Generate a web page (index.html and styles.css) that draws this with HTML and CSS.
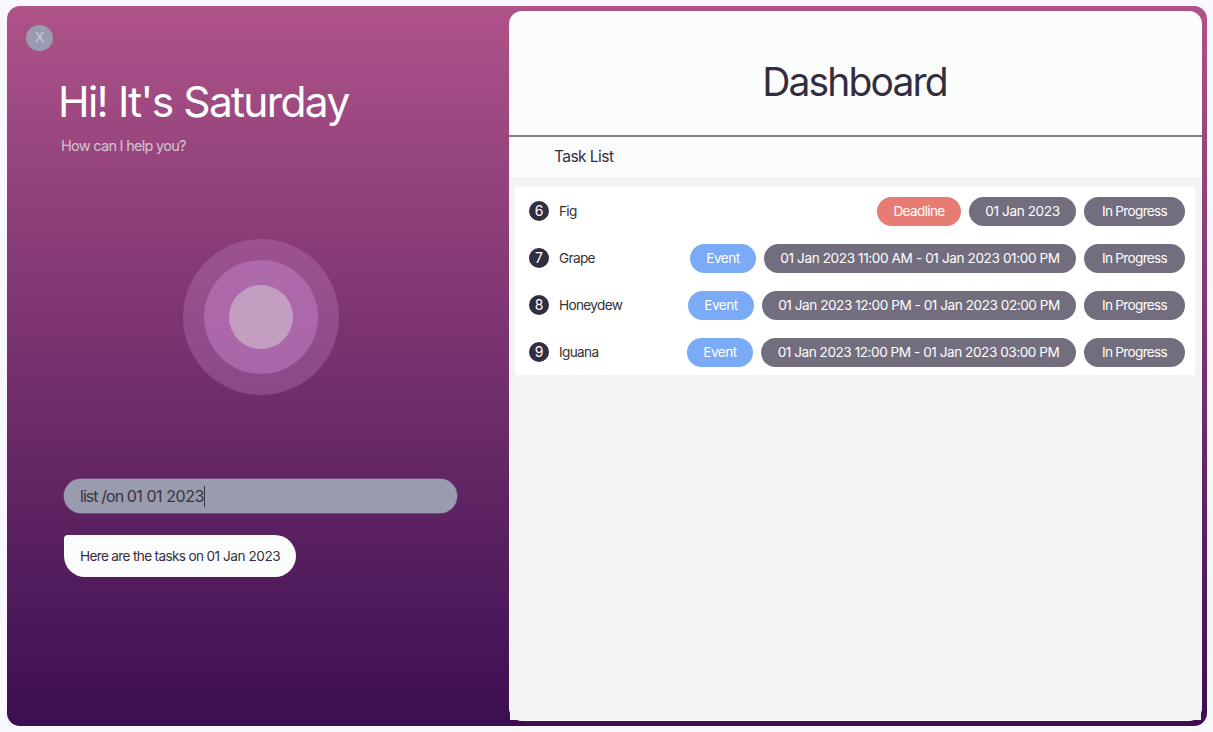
FILE: index.html
```html
<!DOCTYPE html>
<html lang="en">
<head>
<meta charset="utf-8">
<title>Dashboard</title>
<link rel="stylesheet" href="styles.css">
</head>
<body>
<div class="window">
  <section class="assistant">
    <button class="close">X</button>
    <h1 class="greeting">Hi! It's Saturday</h1>
    <p class="prompt">How can I help you?</p>
    <div class="orb"><div class="orb-mid"><div class="orb-core"></div></div></div>
    <div class="command"><span class="command-text">list /on <span class="digits">01 01 2023</span></span><span class="caret"></span></div>
    <div class="reply">Here are the tasks on <span class="digits">01 Jan 2023</span></div>
  </section>
  <main class="panel">
    <header class="panel-head"><h2 class="title">Dashboard</h2></header>
    <div class="subhead"><span>Task List</span></div>
    <div class="content">
      <ul class="tasks">
        <li class="task"><span class="num">6</span><span class="name">Fig</span><span class="tag deadline">Deadline</span><span class="tag date">01 Jan 2023</span><span class="tag status">In Progress</span></li>
        <li class="task"><span class="num">7</span><span class="name">Grape</span><span class="tag event">Event</span><span class="tag range-a">01 Jan 2023 11:00 AM - 01 Jan 2023 01:00 PM</span><span class="tag status">In Progress</span></li>
        <li class="task"><span class="num">8</span><span class="name">Honeydew</span><span class="tag event">Event</span><span class="tag range-b">01 Jan 2023 12:00 PM - 01 Jan 2023 02:00 PM</span><span class="tag status">In Progress</span></li>
        <li class="task"><span class="num">9</span><span class="name">Iguana</span><span class="tag event">Event</span><span class="tag range-c">01 Jan 2023 12:00 PM - 01 Jan 2023 03:00 PM</span><span class="tag status">In Progress</span></li>
      </ul>
    </div>
  </main>
</div>
</body>
</html>
```
FILE: styles.css
```css
* { box-sizing: border-box; }
body {
  margin: 0;
  padding: 6px 6px 6px 7px;
  height: 732px;
  background: #f8f7fd;
  font-family: Inter, "Liberation Sans", sans-serif;
  font-size: 13.6px;
  color: #332d41;
  overflow: hidden;
}
.window {
  display: flex;
  width: 1200px;
  height: 720px;
  padding: 5px 5px 5px 0;
  border-radius: 13px;
  background: linear-gradient(#af5389, #3b0e52);
}
.assistant {
  display: flex;
  flex-direction: column;
  align-items: flex-start;
  width: 502px;
  padding: 14px 0 0 57px;
}
.close {
  width: 27px;
  height: 26px;
  margin-left: -38px;
  padding: 0 0 1px;
  border: 0;
  border-radius: 50%;
  background: #999bb0;
  color: #d0cdd0;
  font: 13.5px/25px Inter, sans-serif;
}
.greeting {
  margin: 24px 0 0 -6px;
  font-size: 42.5px;
  line-height: 54px;
  font-weight: 400;
  letter-spacing: -1.65px;
  word-spacing: 0.5px;
  color: #fff;
  white-space: nowrap;
}
.prompt {
  margin: 7px 0 0 -3px;
  font-size: 14.5px;
  line-height: 20px;
  letter-spacing: -0.72px;
  color: #d0c5ce;
}
.orb, .orb-mid, .orb-core { border-radius: 50%; }
.orb {
  display: grid;
  place-items: center;
  width: 156px;
  height: 156px;
  margin: 83px 0 0 119px;
  background: rgba(191, 130, 192, 0.33);
}
.orb-mid {
  display: grid;
  place-items: center;
  width: 114px;
  height: 114px;
  background: rgba(193, 125, 196, 0.55);
}
.orb-core {
  width: 64px;
  height: 64px;
  background: rgba(207, 187, 205, 0.65);
}
.command {
  display: flex;
  align-items: center;
  width: 393px;
  height: 34px;
  margin-top: 84px;
  padding-left: 16px;
  border-radius: 17px;
  background: #999bae;
  box-shadow: 0 0 0 0.5px #87769a;
  color: #37343c;
  font-size: 16px;
  letter-spacing: -0.95px;
}
.digits { letter-spacing: -0.45px; }
.caret { width: 1px; height: 21px; background: #37343c; }
.reply {
  margin-top: 22px;
  width: 232px;
  height: 42px;
  padding-left: 16px;
  border-radius: 4px 21px 21px 21px;
  background: #fbfdfc;
  line-height: 42px;
  letter-spacing: -0.66px;
  white-space: nowrap;
}
.panel {
  width: 693px;
  height: 710px;
  border-radius: 13px;
  background: #fbfdfc;
}
.panel-head {
  height: 126px;
  padding-top: 46px;
  border-bottom: 2px solid #807e84;
  text-align: center;
}
.title {
  margin: 0 2px 0 0;
  font-size: 39px;
  line-height: 50px;
  font-weight: 400;
  letter-spacing: -1.85px;
}
.subhead {
  height: 40px;
  padding-left: 45px;
  font-size: 15.6px;
  line-height: 39px;
  letter-spacing: -0.6px;
}
.content {
  height: 543px;
  margin: 0 1px;
  padding: 10px 6px 0 5px;
  background: #f3f3f3;
}
.tasks {
  margin: 0;
  padding: 0;
  list-style: none;
  background: #fff;
}
.task {
  display: flex;
  gap: 8px;
  height: 47px;
  padding: 10px 10px 8px 14px;
  white-space: nowrap;
}
.num {
  width: 20px;
  height: 20px;
  margin-top: 4px;
  border-radius: 50%;
  background: #332d41;
  color: #fff;
  font-size: 14px;
  line-height: 20px;
  text-align: center;
}
.name {
  flex: 1;
  margin-left: 2px;
  line-height: 29px;
  letter-spacing: -0.66px;
  color: #333;
}
.tag {
  height: 29px;
  border-radius: 14.5px;
  background: #736e7d;
  color: #fff;
  line-height: 28px;
  text-align: center;
  letter-spacing: -0.4px;
}
.event { width: 66px; background: #7baaf7; letter-spacing: -0.5px; }
.deadline { width: 84px; background: #e67c73; letter-spacing: -0.64px; }
.date { width: 107px; }
.status { width: 101px; letter-spacing: -0.7px; }
.range-a { width: 312px; }
.range-b { width: 314px; letter-spacing: -0.46px; }
.range-c { width: 315px; letter-spacing: -0.46px; }
```
